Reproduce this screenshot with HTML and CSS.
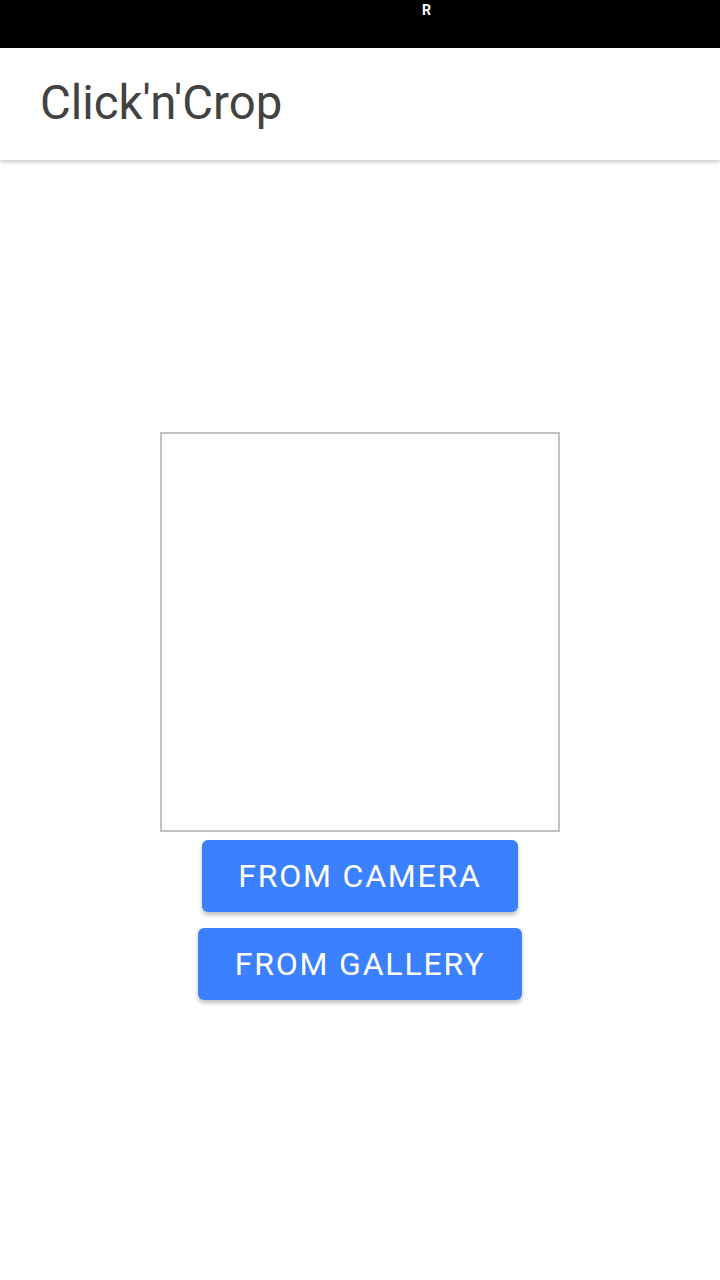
FILE: index.html
```html
<!DOCTYPE html>
<html>
<head>
<meta charset="utf-8">
<link rel="stylesheet" href="styles.css">
</head>
<body>
<div class="status-bar"><span class="status-r">R</span></div>
<header class="app-bar"><h1 class="title">Click'n'Crop</h1></header>
<main class="content">
  <div class="preview"></div>
  <button class="btn btn-camera">From Camera</button>
  <button class="btn btn-gallery">From Gallery</button>
</main>
</body>
</html>
```
FILE: styles.css
```css
html, body {
  margin: 0;
  padding: 0;
  background: #ffffff;
  font-family: Roboto, "Noto Sans", sans-serif;
}
body {
  width: 720px;
  height: 1280px;
  display: flex;
  flex-direction: column;
  overflow: hidden;
}
.status-bar {
  height: 48px;
  background: #000000;
  display: flex;
  justify-content: flex-start;
  padding-left: 422px;
  flex-shrink: 0;
}
.status-r {
  color: #ffffff;
  font-weight: 700;
  font-size: 14px;
  line-height: 20px;
}
.app-bar {
  height: 112px;
  background: #ffffff;
  box-shadow: 0 2px 4px rgba(0,0,0,0.22);
  display: flex;
  align-items: center;
  padding-left: 40px;
  position: relative;
  z-index: 1;
  flex-shrink: 0;
}
.title {
  margin: 0;
  font-weight: 400;
  font-size: 47.3px;
  line-height: 56px;
  color: #424242;
  letter-spacing: 0;
  padding-bottom: 2px;
}
.content {
  flex: 1;
  display: flex;
  flex-direction: column;
  align-items: center;
  justify-content: center;
}
.preview {
  width: 396px;
  height: 396px;
  border: 2px solid #c2c2c2;
}
.btn {
  margin: 8px 0;
  height: 72px;
  border: none;
  border-radius: 6px;
  background: #3a80ff;
  color: #ffffff;
  font-family: Roboto, "Noto Sans", sans-serif;
  font-size: 32px;
  font-weight: 400;
  letter-spacing: 1.8px;
  text-transform: uppercase;
  box-shadow: 0 3px 4px rgba(0,0,0,0.25);
  padding: 0;
}
.btn-camera {
  width: 316px;
}
.btn-gallery {
  width: 324px;
  margin-top: 8px;
}
```
